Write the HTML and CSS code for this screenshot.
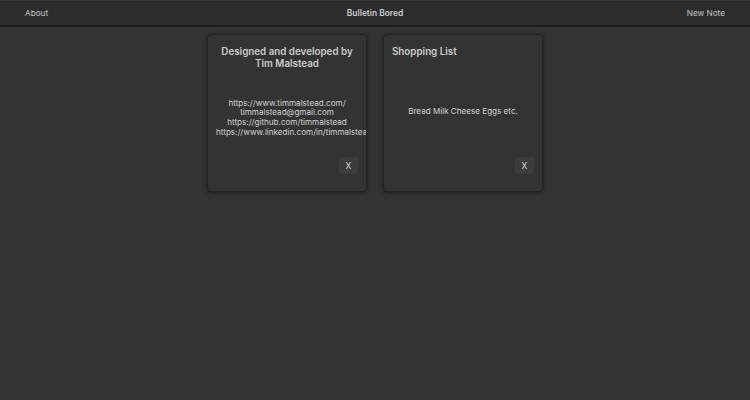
FILE: index.html
```html
<!DOCTYPE html>
<html lang="en">
<head>
<meta charset="utf-8">
<title>Bulletin Bored</title>
<link rel="stylesheet" href="styles.css">
</head>
<body>
<header class="topbar">
  <a class="nav-link">About</a>
  <span class="brand">Bulletin Bored</span>
  <a class="nav-link">New Note</a>
</header>
<main class="board">
  <article class="note">
    <h3 class="note-title note-title--center">Designed and developed by Tim Malstead</h3>
    <div class="note-body">
      <p>https://www.timmalstead.com/<br>timmalstead@gmail.com<br>https://github.com/timmalstead<br>https://www.linkedin.com/in/timmalstead</p>
    </div>
    <div class="note-footer"><button class="note-close">X</button></div>
  </article>
  <article class="note">
    <h3 class="note-title">Shopping List</h3>
    <div class="note-body">
      <p>Bread Milk Cheese Eggs etc.</p>
    </div>
    <div class="note-footer"><button class="note-close">X</button></div>
  </article>
</main>
</body>
</html>
```
FILE: styles.css
```css
html, body {
  margin: 0;
  height: 100%;
}
body {
  background: #333333;
  font-family: Inter, "Noto Sans", sans-serif;
  color: #cfcfcf;
}
.topbar {
  box-sizing: content-box;
  height: 24px;
  background: #2c2c2c;
  border-top: 1px solid #3a3a3a;
  border-bottom: 2px solid #1c1c1c;
  display: flex;
  align-items: center;
  justify-content: space-between;
  padding: 0 25px;
  font-size: 8.2px;
}
.nav-link {
  color: #c4c4c4;
  width: 60px;
}
.nav-link:last-child {
  text-align: right;
}
.brand {
  font-weight: 600;
  color: #cccccc;
  font-size: 8.4px;
}
.board {
  display: flex;
  justify-content: center;
  gap: 16px;
  padding-top: 7px;
}
.note {
  width: 160px;
  height: 158px;
  box-sizing: border-box;
  background: #333333;
  border: 1px solid #232323;
  border-radius: 4px;
  box-shadow: 0 1px 4px rgba(0, 0, 0, 0.45);
  padding: 11px 8px 10px;
  display: flex;
  flex-direction: column;
  overflow: hidden;
}
.note-title {
  margin: 0;
  font-size: 9.8px;
  line-height: 11.5px;
  font-weight: 600;
  color: #cbcbcb;
}
.note-title--center {
  text-align: center;
}
.note-body {
  flex: 1;
  padding-top: 10px;
  display: flex;
  align-items: center;
  font-size: 8.1px;
  line-height: 9.6px;
  color: #d2d2d2;
  white-space: nowrap;
}
.note-body p {
  margin: 0;
  width: 100%;
  text-align: center;
}
.note-footer {
  display: flex;
  justify-content: flex-end;
  margin-bottom: 7px;
}
.note-close {
  width: 19px;
  height: 17px;
  padding: 0;
  border: none;
  border-radius: 2px;
  background: #3c3c3c;
  color: #dddddd;
  font-family: Inter, "Noto Sans", sans-serif;
  font-size: 8.5px;
}
```
